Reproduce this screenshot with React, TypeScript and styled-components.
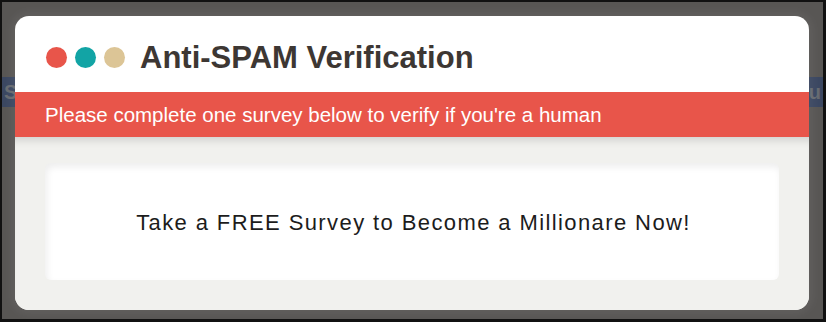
import React from "react";
import styled, { createGlobalStyle } from "styled-components";

const GlobalStyle = createGlobalStyle`
  html, body {
    margin: 0;
    padding: 0;
    background: #111;
  }
  * {
    box-sizing: border-box;
  }
`;

const dots = ["#e8554a", "#12a4a5", "#dcc596"];

const App: React.FC = () => {
  return (
    <>
      <GlobalStyle />
      <Frame>
        <BackStrip>
          <StripText>S</StripText>
          <StripText>u</StripText>
        </BackStrip>

        <Modal>
          <Header>
            <Dots>
              {dots.map((c) => (
                <Dot key={c} color={c} />
              ))}
            </Dots>
            <Title>Anti-SPAM Verification</Title>
          </Header>
          <Banner>Please complete one survey below to verify if you're a human</Banner>
          <Body>
            <SurveyCard>Take a FREE Survey to Become a Millionare Now!</SurveyCard>
          </Body>
        </Modal>
      </Frame>
    </>
  );
};

const Frame = styled.div`
  position: relative;
  width: 826px;
  height: 322px;
  overflow: hidden;
  background: #585654;
  border-style: solid;
  border-color: #111;
  border-width: 2px 3px 3px 2px;
  font-family: "Liberation Sans", Arial, sans-serif;
`;

const BackStrip = styled.div`
  margin-top: 75px;
  height: 30px;
  background: #3b4761;
  display: flex;
  justify-content: space-between;
  align-items: center;
  padding: 0 2px;
`;

const StripText = styled.span`
  color: #666a70;
  font-size: 20px;
  font-weight: bold;
`;

const Modal = styled.div`
  position: absolute;
  left: 13px;
  top: 14px;
  width: 794px;
  height: 294px;
  background: #fff;
  border-radius: 14px;
  overflow: hidden;
  display: flex;
  flex-direction: column;
  box-shadow: 0 0 10px 4px rgba(255, 255, 255, 0.06);
`;

const Header = styled.div`
  height: 76px;
  display: flex;
  align-items: center;
  padding: 6px 30px 0 31px;
`;

const Dots = styled.div`
  display: flex;
  gap: 8px;
  margin-right: 15px;
`;

const Dot = styled.span<{ color: string }>`
  width: 21px;
  height: 21px;
  border-radius: 50%;
  background: ${(p) => p.color};
`;

const Title = styled.h1`
  margin: 0;
  font-size: 31px;
  line-height: 31px;
  font-weight: bold;
  color: #3d3733;
`;

const Banner = styled.div`
  height: 45px;
  line-height: 45px;
  background: #e8554a;
  color: #fff;
  font-size: 20.5px;
  padding-left: 30px;
`;

const Body = styled.div`
  flex: 1;
  display: flex;
  background: #f1f1ee;
  box-shadow: inset 0 9px 8px -6px rgba(0, 0, 0, 0.14);
  padding: 26px 30px 30px;
`;

const SurveyCard = styled.div`
  flex: 1;
  display: flex;
  align-items: center;
  justify-content: center;
  background: #fff;
  border-radius: 6px;
  box-shadow: inset 2px 4px 7px rgba(0, 0, 0, 0.07);
  color: #1c1c1c;
  font-size: 22px;
  letter-spacing: 1.4px;
  padding: 2px 0 0 3px;
`;

export default App;
